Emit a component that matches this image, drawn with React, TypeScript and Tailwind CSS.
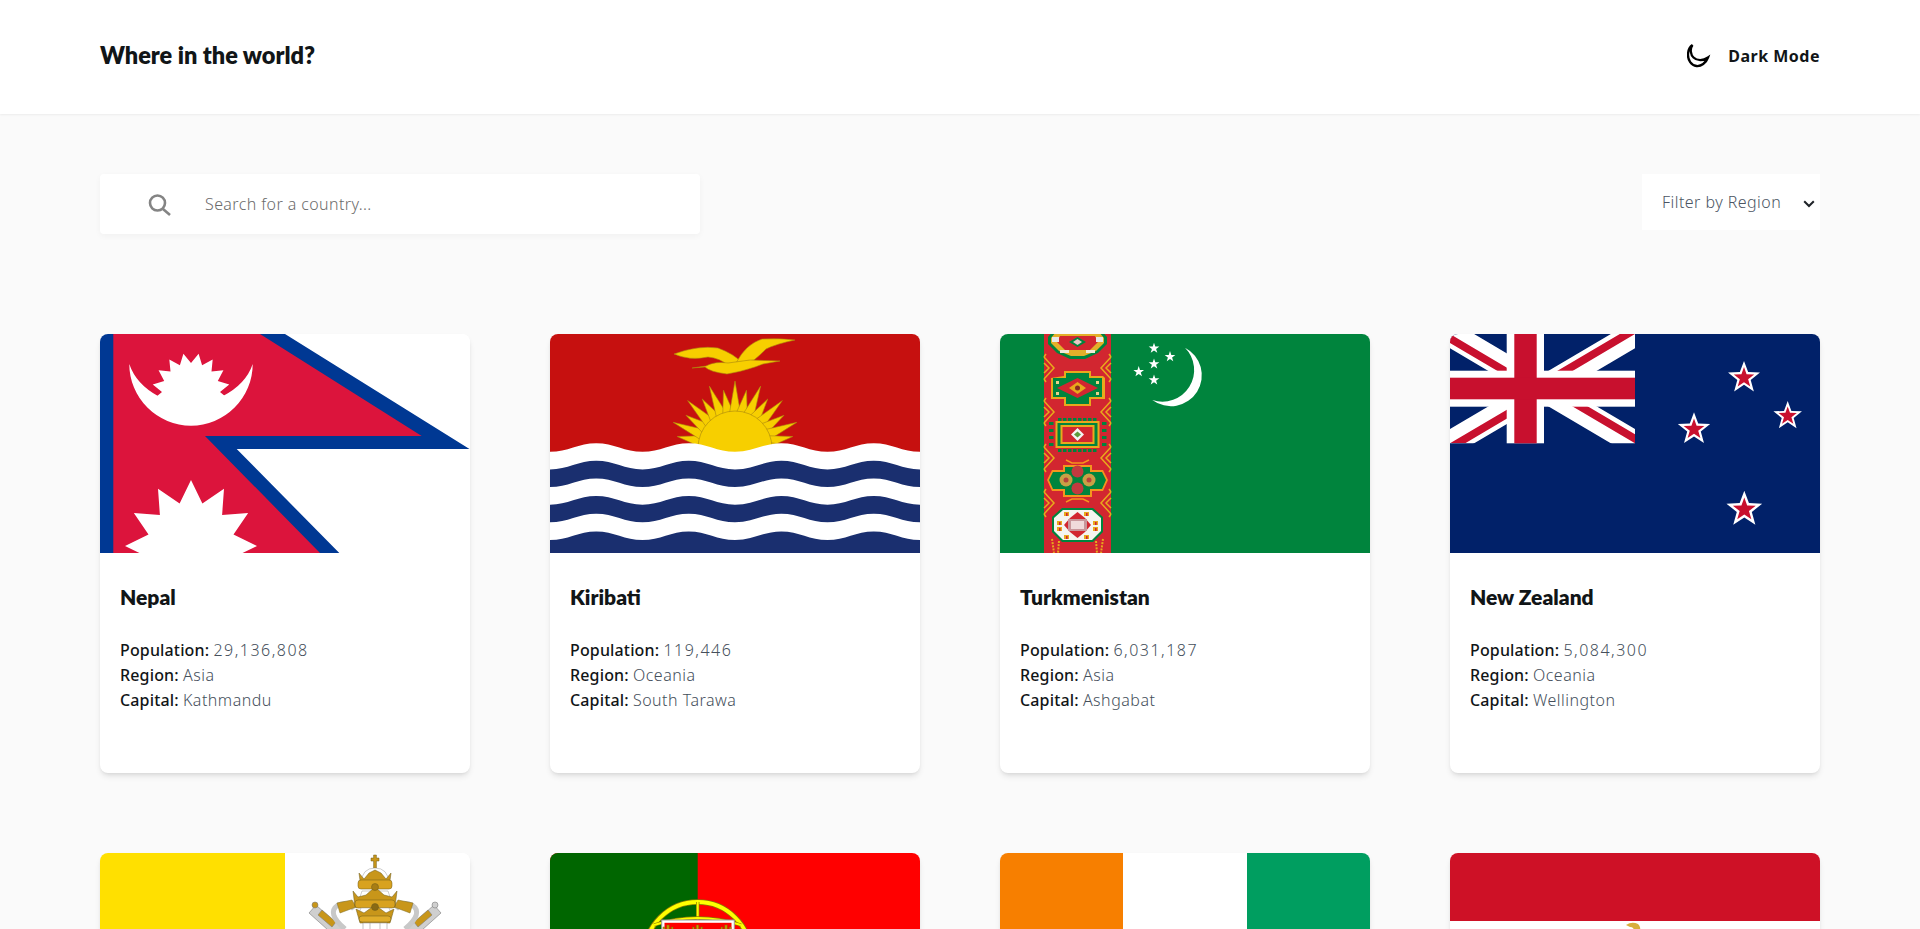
// star / sun outline helper for the flags
function spikes(cx: number, cy: number, R: number, r: number, n: number, rot = 0) {
  const pts: string[] = [];
  for (let i = 0; i < n * 2; i++) {
    const rad = i % 2 === 0 ? R : r;
    const a = ((rot + (i * 180) / n) * Math.PI) / 180;
    pts.push(`${(cx + rad * Math.sin(a)).toFixed(2)},${(cy - rad * Math.cos(a)).toFixed(2)}`);
  }
  return pts.join(' ');
}

// one wave band, filled down to the bottom of the flag
function wave(y: number) {
  const amp = 4.3;
  const half = 46.25;
  let d = `M0 ${y + amp}`;
  for (let i = 0; i < 8; i++) {
    const x = i * half;
    const [a, b] = i % 2 === 0 ? [y + amp, y - amp] : [y - amp, y + amp];
    d += ` C${x + half * 0.38} ${a} ${x + half * 0.62} ${b} ${x + half} ${b}`;
  }
  return `${d} V219 H0 Z`;
}

function Nepal() {
  return (
    <svg viewBox="0 0 370 219" className="block h-full w-full">
      <clipPath id="nepal-sun">
        <rect width="370" height="64" />
      </clipPath>
      <rect width="370" height="219" fill="#fff" />
      <path d="M0 0H185L369.5 115H136.7L239.3 219H0Z" fill="#003893" />
      <path d="M13.3 0H160L321.7 102H105L220 219H13.3Z" fill="#dc143c" />
      <path d="M29.3 30A61.7 61.7 0 0 0 152.7 30Q146 50 123 62H58Q36 50 29.3 30Z" fill="#fff" />
      <polygon points={spikes(91, 58, 39, 29, 16, 11.25)} fill="#fff" clipPath="url(#nepal-sun)" />
      <polygon points={spikes(91, 212, 66, 44, 12)} fill="#fff" />
    </svg>
  );
}

function Kiribati() {
  const rays = Array.from({ length: 17 }, (_, i) => -90 + i * 11.25);
  const bands = [
    [113.5, '#fff'],
    [131.1, '#1a2f6f'],
    [148.8, '#fff'],
    [166.4, '#1a2f6f'],
    [184, '#fff'],
    [201.7, '#1a2f6f'],
  ] as const;
  return (
    <svg viewBox="0 0 370 219" className="block h-full w-full">
      <rect width="370" height="219" fill="#c6100f" />
      <g stroke="#a9860f" strokeWidth="0.6" fill="#f7cf00">
        {rays.map((deg, i) => {
          const a = (deg * Math.PI) / 180;
          const R = i % 2 === 0 ? 67 : 59;
          const tx = 185 + R * Math.sin(a);
          const ty = 114 - R * Math.cos(a);
          const w = 0.15;
          const x1 = 185 + 36 * Math.sin(a - w);
          const y1 = 114 - 36 * Math.cos(a - w);
          const x2 = 185 + 36 * Math.sin(a + w);
          const y2 = 114 - 36 * Math.cos(a + w);
          return <polygon key={deg} points={`${x1},${y1} ${tx},${ty} ${x2},${y2}`} />;
        })}
        <circle cx="185" cy="114" r="37" />
        <path d="M124 20Q148 11 168 14Q184 20 191 28L179 32Q170 24 158 23Q140 27 124 20Z" />
        <path d="M186 29Q196 10 212 5Q230 4 245 6Q226 10 216 15Q209 22 204 26Z" />
        <path d="M142 34L156 32Q165 27 178 29L200 26L230 27L213 30L205 33Q190 38 177 40Q160 38 155 33Z" />
      </g>
      {bands.map(([y, color]) => (
        <path key={y} d={wave(y)} fill={color} />
      ))}
    </svg>
  );
}

function Knot({ x, y, flip }: { x: number; y: number; flip?: boolean }) {
  const s = flip ? -1 : 1;
  return (
    <g transform={`translate(${x} ${y}) scale(${s} 1)`} fill="none" stroke="#e8a91c" strokeWidth="1.5">
      <path d="M0 -11L10 0L0 11" />
      <path d="M0 -5L5 0L0 5" />
      <path d="M2 -14L0 -11M2 14L0 11" />
    </g>
  );
}

function Turkmenistan() {
  return (
    <svg viewBox="0 0 370 219" className="block h-full w-full">
      <rect width="370" height="219" fill="#00843d" />
      <rect x="44" width="67" height="219" fill="#d22630" />
      {[34, 78, 124, 169].map(y => (
        <g key={y}>
          <Knot x={44} y={y} />
          <Knot x={111} y={y} flip />
        </g>
      ))}
      {/* gul 1, cut by the top edge */}
      <polygon points="48,3 54,-4 101,-4 107,3 107,10 98,19 85,25 70,25 57,19 48,10" fill="#00843d" />
      <polygon points="51,4 56,-2 99,-2 104,4 104,9 96,17 84,22 71,22 59,17 51,9" fill="#e3b02a" />
      <polygon points="60,2 95,2 98,8 90,16 65,16 57,8" fill="#d22630" />
      <polygon points="77.5,3 86,8 77.5,13 69,8" fill="#00843d" />
      <polygon points="77.5,5 82,8 77.5,11 73,8" fill="#e8c6c6" />
      <rect x="52" y="3" width="7" height="5" fill="#e8e8e8" />
      <rect x="96" y="3" width="7" height="5" fill="#e8e8e8" />
      <rect x="60" y="16" width="9" height="3" fill="#f1e9d8" />
      <rect x="86" y="16" width="9" height="3" fill="#f1e9d8" />
      {/* gul 2 */}
      <polygon points="64,37 91,37 91,42 103,42 105,44 105,65 91,65 91,72 64,72 64,65 51,65 51,44 64,42" fill="#e8a91c" />
      <polygon points="66,39 89,39 89,44 102,44 102,63 89,63 89,70 66,70 66,63 53,63 53,44 66,44" fill="#00843d" />
      <polygon points="77.5,44 98,54 77.5,64 57,54" fill="#d22630" />
      <polygon points="77.5,48 86,54 77.5,60 69,54" fill="#e8a91c" />
      <circle cx="77.5" cy="54" r="2.5" fill="#8a2b20" />
      <rect x="56" y="47" width="3" height="3" fill="#e8d28a" />
      <rect x="96" y="47" width="3" height="3" fill="#e8d28a" />
      <rect x="56" y="58" width="3" height="3" fill="#e8d28a" />
      <rect x="96" y="58" width="3" height="3" fill="#e8d28a" />
      {/* gul 3 */}
      <g fill="#00843d">
        {[84, 115].map(y =>
          [58, 63, 68, 73, 78, 83, 88, 93].map(x => <rect key={`${x}-${y}`} x={x} y={y} width="3.5" height="3" />),
        )}
        {[88, 95, 102, 109].map(y => (
          <g key={y}>
            <rect x="49" y={y} width="4.5" height="3" />
            <rect x="102" y={y} width="4.5" height="3" />
          </g>
        ))}
      </g>
      <rect x="55.5" y="87" width="44" height="27" fill="#e8a91c" />
      <rect x="57.5" y="89" width="40" height="23" fill="#00843d" />
      <rect x="60.5" y="91" width="34" height="19" fill="#e8a91c" />
      <rect x="62.5" y="93" width="30" height="15" fill="#d22630" />
      <polygon points="77.5,94 84,100.5 77.5,107 71,100.5" fill="#f4f4f4" />
      <polygon points="77.5,97.5 81,100.5 77.5,103.5 74,100.5" fill="#5d9b3c" />
      {/* gul 4 */}
      <polygon points="63,131 92,131 92,136 103,136 108,146 103,157 92,157 92,163 63,163 63,157 52,157 47,146 52,136 63,136" fill="#f5951d" />
      <polygon points="65,133 90,133 90,138 102,138 106,146 102,155 90,155 90,161 65,161 65,155 53,155 49,146 53,138 65,138" fill="#00843d" />
      <circle cx="77.5" cy="137.5" r="6" fill="#c13a3f" />
      <circle cx="77.5" cy="154.5" r="6" fill="#c13a3f" />
      <circle cx="66" cy="146" r="6.5" fill="#c9a045" />
      <circle cx="89" cy="146" r="6.5" fill="#c9a045" />
      <circle cx="66" cy="146" r="2.5" fill="#b5433a" />
      <circle cx="89" cy="146" r="2.5" fill="#b5433a" />
      <path d="M66 126L72 129H83L89 126M66 168L72 165H83L89 168" fill="none" stroke="#f5951d" strokeWidth="1.4" />
      {/* gul 5 */}
      <polygon points="62,174 93,174 103,183 103,198 93,208 62,208 52,198 52,183" fill="#00843d" />
      <polygon points="63,176 92,176 101,184 101,197 92,206 63,206 54,197 54,184" fill="#f5f5f0" />
      <g fill="#e8a91c">
        {[[57, 187], [57, 193], [93, 187], [93, 193], [64, 178], [84, 178], [64, 201], [84, 201]].map(([x, y]) => (
          <rect key={`${x}-${y}`} x={x} y={y} width="5" height="4" />
        ))}
      </g>
      <g fill="#d22630">
        {[[59, 188], [59, 194], [95, 188], [95, 194], [66, 179], [86, 179], [66, 202], [86, 202]].map(([x, y]) => (
          <rect key={`${x}-${y}`} x={x} y={y} width="1.6" height="3" />
        ))}
      </g>
      <polygon points="77.5,178 85,184 91,191 85,198 77.5,204 70,198 64,191 70,184" fill="#d22630" />
      <rect x="68" y="185" width="19" height="12" fill="#c9969a" />
      <rect x="71" y="187" width="13" height="8" fill="#f0dada" />
      <path d="M52 205L54 219M59 207L58 219M103 205L101 219M96 207L97 219" stroke="#e8a91c" strokeWidth="2" strokeDasharray="2 1.2" />
      <path d="M185 13.7A30.95 30.95 0 1 1 152.3 66A31.7 31.7 0 0 0 185 13.7Z" fill="#fff" />
      {[[154, 14.3], [170, 22.7], [154, 30], [138.7, 37.7], [154, 46]].map(([x, y]) => (
        <polygon key={`${x}-${y}`} points={spikes(x, y, 5.6, 2.2, 5)} fill="#fff" />
      ))}
    </svg>
  );
}

function NewZealand() {
  const stars = [
    [294, 43.8, 16.8],
    [337.7, 82, 15],
    [244, 95.3, 17],
    [294.3, 175.5, 18.8],
  ];
  return (
    <svg viewBox="0 0 370 219" className="block h-full w-full">
      <rect width="370" height="219" fill="#012169" />
      <svg x="0" y="0" width="185" height="109.3" viewBox="0 0 60 30" preserveAspectRatio="none">
        <clipPath id="jack">
          <path d="M30 15H60V30ZV30H0ZH0V0ZV0H60Z" />
        </clipPath>
        <path d="M0 0L60 30M60 0L0 30" stroke="#fff" strokeWidth="7" />
        <path d="M0 0L60 30M60 0L0 30" stroke="#c8102e" strokeWidth="4.4" clipPath="url(#jack)" />
      </svg>
      <rect x="56.7" width="37.3" height="109.3" fill="#fff" />
      <rect y="36.7" width="185" height="36" fill="#fff" />
      <rect x="64.3" width="22.4" height="109.3" fill="#c8102e" />
      <rect y="43.7" width="185" height="21.6" fill="#c8102e" />
      {stars.map(([x, y, R]) => (
        <g key={x}>
          <polygon points={spikes(x, y, R, R * 0.42, 5)} fill="#fff" />
          <polygon points={spikes(x, y, R * 0.64, R * 0.26, 5)} fill="#c8102e" />
        </g>
      ))}
    </svg>
  );
}

function VaticanCity() {
  return (
    <svg viewBox="0 0 370 219" className="block h-full w-full">
      <rect width="370" height="219" fill="#fff" />
      <rect width="185" height="219" fill="#ffe000" />
      {/* keys */}
      <g stroke="#7c7c7c" strokeWidth="0.6">
        <path d="M216 52L245 78L238 86L209 60Z" fill="#cfcfcf" />
        <path d="M334 52L305 78L312 86L341 60Z" fill="#cfcfcf" />
        <circle cx="215" cy="52" r="3" fill="#c8961a" />
        <circle cx="335" cy="52" r="3" fill="#cfcfcf" />
        <path d="M222 57L236 69L232 74L218 62Z" fill="#c8961a" />
        <path d="M328 57L314 69L318 74L332 62Z" fill="#c8961a" />
      </g>
      <g fill="none" strokeWidth="5">
        <path d="M245 76Q226 60 238 52Q248 48 254 56" stroke="#c8c8c8" />
        <path d="M305 76Q324 60 312 52Q302 48 296 56" stroke="#c8c8c8" />
      </g>
      <path d="M237 50L252 47L256 54L240 60Z" fill="#c8961a" stroke="#7c6a20" strokeWidth="0.5" />
      <path d="M313 50L298 47L294 54L310 60Z" fill="#c8961a" stroke="#7c6a20" strokeWidth="0.5" />
      {/* tiara */}
      <g stroke="#6d5a18" strokeWidth="0.5">
        <path d="M273.6 2H276.4V5H279V8H276.4V15H273.6V8H271V5H273.6Z" fill="#c8961a" />
        <path d="M261 30Q262 15 275 15Q288 15 289 30" fill="#fff" stroke="#9a9a9a" />
        <path d="M259 20L264 26L269 20L275 17L281 20L286 26L291 20L289 35H261Z" fill="#c8961a" />
        <rect x="258" y="27" width="34" height="9" rx="3" fill="#d8a21f" />
        <path d="M262 38H288L291 47H259Z" fill="#fff" stroke="#9a9a9a" />
        <path d="M253 38L258 44L266 42L275 34L284 42L292 44L297 38L295 54H255Z" fill="#c8961a" />
        <rect x="255" y="47" width="40" height="8" rx="3" fill="#d8a21f" />
        <path d="M261 55H289L292 62H258Z" fill="#fff" stroke="#9a9a9a" />
        <path d="M256 56L264 60L275 52L286 60L294 56L290 70H260Z" fill="#c8961a" />
        <rect x="259" y="63" width="32" height="6" rx="3" fill="#e0ad2a" />
        <circle cx="275" cy="34" r="3.5" fill="#a87d14" />
        <circle cx="275" cy="54" r="3.5" fill="#8a6a14" />
      </g>
      <path d="M263 70H287V84H263Z" fill="#fff" stroke="#9a9a9a" strokeWidth="0.6" />
      <path d="M270 70V84M280 70V84" stroke="#9a9a9a" strokeWidth="0.6" />
    </svg>
  );
}

function Portugal() {
  return (
    <svg viewBox="0 0 370 219" className="block h-full w-full">
      <rect width="370" height="219" fill="#f00" />
      <rect width="147.7" height="219" fill="#060" />
      <g fill="none">
        <circle cx="147.7" cy="102" r="53" stroke="#8a7a00" strokeWidth="5.4" />
        <circle cx="147.7" cy="102" r="53" stroke="#ffff00" strokeWidth="3.8" />
        <path d="M147.7 49V155" stroke="#8a7a00" strokeWidth="3.4" />
        <path d="M147.7 49V155" stroke="#ffff00" strokeWidth="2" />
        <path d="M104 72Q147.7 58 191 72" stroke="#8a7a00" strokeWidth="3.4" />
        <path d="M104 72Q147.7 58 191 72" stroke="#ffff00" strokeWidth="2" />
      </g>
      <rect x="111.7" y="67" width="72.6" height="100" fill="#fff" stroke="#999" strokeWidth="1" />
      <rect x="114.5" y="69.8" width="67" height="95" fill="#f00" />
      {[118, 147.5, 176].map(x => (
        <path
          key={x}
          d={`M${x - 5} 80V74H${x - 3.4}V76H${x - 1.2}V72H${x + 1.2}V76H${x + 3.4}V74H${x + 5}V80Z`}
          fill="#c8a000"
          stroke="#7c6a00"
          strokeWidth="0.5"
        />
      ))}
    </svg>
  );
}

function IvoryCoast() {
  return (
    <div className="flex h-full">
      <div className="flex-1 bg-[#f77f00]" />
      <div className="flex-1 bg-white" />
      <div className="flex-1 bg-[#009e60]" />
    </div>
  );
}

function Egypt() {
  return (
    <svg viewBox="0 0 370 219" className="block h-full w-full">
      <rect width="370" height="219" fill="#fff" />
      <rect width="370" height="68" fill="#ce1126" />
      <rect y="146" width="370" height="73" fill="#000" />
      <path d="M176 72Q182 68 188 71Q191 74 190 78H184Q184 74 180 74Z" fill="#d8ae3c" />
    </svg>
  );
}

const countries = [
  { name: 'Nepal', population: '29,136,808', region: 'Asia', capital: 'Kathmandu', Flag: Nepal },
  { name: 'Kiribati', population: '119,446', region: 'Oceania', capital: 'South Tarawa', Flag: Kiribati },
  { name: 'Turkmenistan', population: '6,031,187', region: 'Asia', capital: 'Ashgabat', Flag: Turkmenistan },
  { name: 'New Zealand', population: '5,084,300', region: 'Oceania', capital: 'Wellington', Flag: NewZealand },
  { name: 'Vatican City', population: '451', region: 'Europe', capital: 'Vatican City', Flag: VaticanCity },
  { name: 'Portugal', population: '10,305,564', region: 'Europe', capital: 'Lisbon', Flag: Portugal },
  { name: 'Ivory Coast', population: '26,378,275', region: 'Africa', capital: 'Yamoussoukro', Flag: IvoryCoast },
  { name: 'Egypt', population: '102,334,403', region: 'Africa', capital: 'Cairo', Flag: Egypt },
];

function Stat({ label, value, wide }: { label: string; value: string; wide?: boolean }) {
  return (
    <p className="leading-[25px]">
      <span className="font-medium tracking-[0.15px]">{label}:</span>{' '}
      <span className={`font-light text-[#454f5b] ${wide ? 'tracking-[1.5px]' : 'tracking-[0.5px]'}`}>{value}</span>
    </p>
  );
}

export default function App() {
  return (
    <div className="min-h-screen bg-[#fafafa] font-['Noto_Sans',sans-serif] text-[#111517]">
      <header className="flex h-[114px] items-center justify-between bg-white px-[100px] pb-0.5 shadow-[0_1px_2px_rgba(0,0,0,0.06)]">
        <h1 className="font-['Lato',sans-serif] text-[23.5px] font-extrabold">Where in the world?</h1>
        <button className="flex items-center gap-[17px] font-bold tracking-[0.5px]">
          <svg viewBox="0 0 24 24" className="h-6 w-6" fill="none" stroke="#000" strokeWidth="2.3">
            <path d="M5.5 1C2.5 5 3.8 11 6.5 13.5C10 17 16 17 21 13.5C19 19 14 22.5 9.5 22C4 21.5 1 16 1 11C1 7 2.5 3 5.5 1Z" />
          </svg>
          Dark Mode
        </button>
      </header>

      <main className="px-[100px] pt-[60px] pb-20">
        <div className="flex items-start justify-between">
          <div className="flex h-[60px] w-[600px] items-center rounded bg-white pl-12 shadow-[0_2px_6px_rgba(0,0,0,0.04)]">
            <svg viewBox="0 0 24 24" className="h-6 w-6" fill="none" stroke="#848484" strokeWidth="2.6">
              <circle cx="9.5" cy="11" r="7.5" />
              <path d="M15 17L22 23" />
            </svg>
            <input
              placeholder="Search for a country..."
              className="ml-[33px] flex-1 bg-transparent font-light tracking-[0.4px] outline-none placeholder:text-[#6b6b6b]"
            />
          </div>
          <div className="relative h-14 w-[178px] bg-white">
            <select className="h-full w-full appearance-none bg-transparent pl-5 font-light tracking-[0.45px] text-[#4b5563] outline-none">
              <option>Filter by Region</option>
            </select>
            <svg viewBox="0 0 12 8" className="pointer-events-none absolute top-[26px] right-[5px] h-2 w-3">
              <path d="M1.2 1.2L6 6L10.8 1.2" fill="none" stroke="#1f2328" strokeWidth="2" />
            </svg>
          </div>
        </div>

        <div className="mt-[100px] grid grid-cols-4 gap-20">
          {countries.map(({ name, population, region, capital, Flag }) => (
            <article key={name} className="h-[439px] overflow-hidden rounded-lg bg-white shadow-md">
              <div className="h-[219px]">
                <Flag />
              </div>
              <div className="px-5 pt-6">
                <h2 className="font-['Lato',sans-serif] text-[21px] leading-10 font-extrabold">{name}</h2>
                <div className="mt-[21px]">
                  <Stat label="Population" value={population} wide />
                  <Stat label="Region" value={region} />
                  <Stat label="Capital" value={capital} />
                </div>
              </div>
            </article>
          ))}
        </div>
      </main>
    </div>
  );
}
